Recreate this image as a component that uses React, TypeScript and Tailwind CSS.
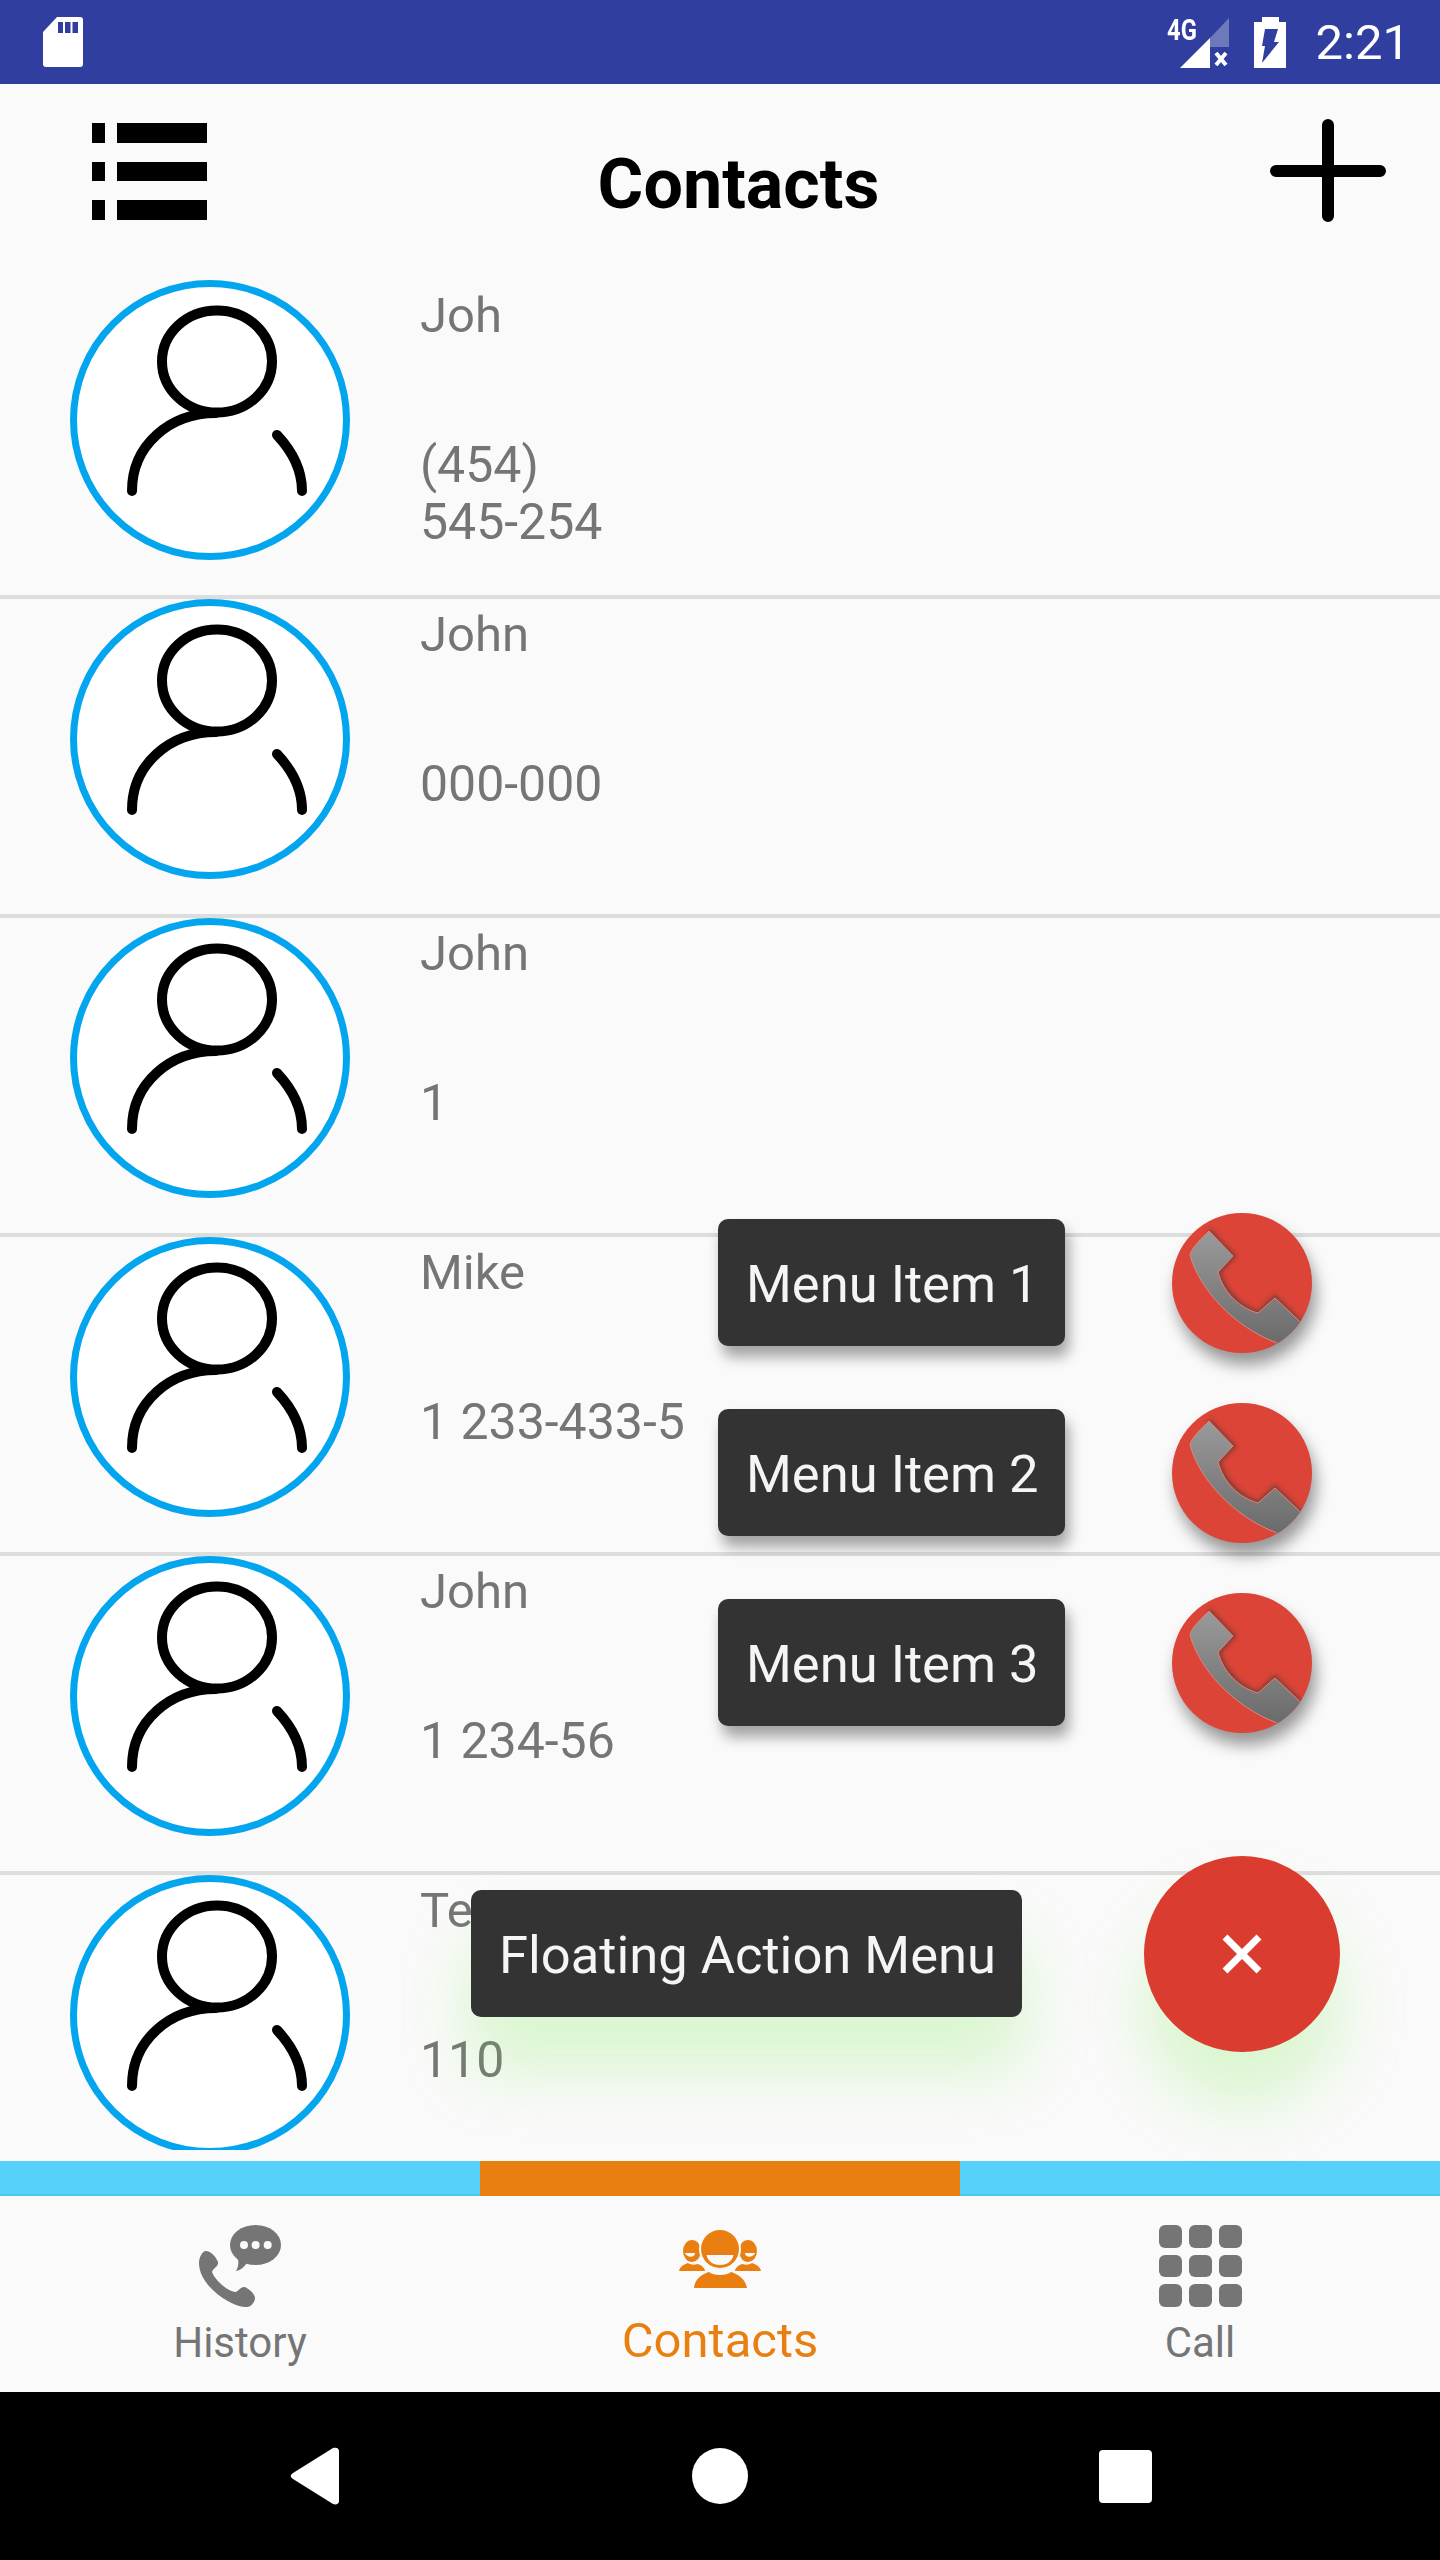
const contacts = [
  { name: "Joh", phone: "(454)\n545-254" },
  { name: "John", phone: "000-000" },
  { name: "John", phone: "1" },
  { name: "Mike", phone: "1 233-433-5" },
  { name: "John", phone: "1 234-56" },
  { name: "Te", phone: "110" },
];

const menuItems = ["Menu Item 1", "Menu Item 2", "Menu Item 3"];

function StatusBar() {
  return (
    <div className="relative flex h-[84px] shrink-0 items-center justify-between bg-[#303f9f] pl-[43px] pr-[30px] text-white">
      <svg width="40" height="50" viewBox="0 0 40 50" className="mt-[-1px]">
        <path d="M14 0H37a3 3 0 0 1 3 3V47a3 3 0 0 1-3 3H3a3 3 0 0 1-3-3V15Z" fill="#fff" />
        <rect x="15" y="5" width="5" height="11" fill="#303f9f" />
        <rect x="22" y="5" width="5.5" height="11" fill="#303f9f" />
        <rect x="29.5" y="5" width="5.5" height="11" fill="#303f9f" />
      </svg>
      <div className="flex items-center">
        <div className="relative h-[51px] w-[62px]">
          <span className="absolute left-0 top-[-4px] origin-left scale-x-[0.82] text-[29px] font-bold leading-[34px]">4G</span>
        </div>
        <svg width="49" height="50" viewBox="0 0 49 50" className="ml-[-49px] mt-[1px]">
          <path d="M30 20 49 0V29H30Z" fill="#fff" fillOpacity="0.3" />
          <path d="M0 50 30 20V50Z" fill="#fff" />
          <path d="M36 35 46 47M46 35 36 47" stroke="#fff" strokeWidth="4" />
        </svg>
        <svg width="32" height="51" viewBox="0 0 32 51" className="ml-[25px]">
          <path d="M8 0H25V5H32V51H0V5H8Z" fill="#fff" />
          <path d="M11 12H24L20 25H25L8 46 11 29H8Z" fill="#303f9f" />
        </svg>
        <span className="ml-[30px] text-[49px] leading-[57px]">2:21</span>
      </div>
    </div>
  );
}

function AppHeader() {
  return (
    <div className="flex h-[196px] shrink-0 items-center justify-between pl-[92px] pr-[54px]">
      <svg width="115" height="97" viewBox="0 0 115 97" className="mt-[-22px]">
        <rect x="0" y="0" width="13" height="20" />
        <rect x="25" y="0" width="90" height="20" />
        <rect x="0" y="39" width="13" height="19" />
        <rect x="25" y="39" width="90" height="19" />
        <rect x="0" y="77" width="13" height="20" />
        <rect x="25" y="77" width="90" height="20" />
      </svg>
      <h1 className="mt-[4px] text-[70px] font-bold leading-[82px] text-black">Contacts</h1>
      <svg width="116" height="103" viewBox="0 0 116 103" className="mt-[-23px]">
        <path d="M58 6V97M6 52H110" stroke="#000" strokeWidth="12" strokeLinecap="round" />
      </svg>
    </div>
  );
}

function Avatar() {
  return (
    <div className="h-[280px] w-[280px] shrink-0 rounded-full border-[7px] border-[#03a5ee] bg-white">
      <svg width="280" height="280" viewBox="0 0 280 280" className="m-[-7px]" fill="none" stroke="#000" strokeWidth="10" strokeLinecap="round">
        <ellipse cx="147" cy="81.5" rx="55" ry="51" />
        <path d="M62 211C62 165 100 133 146 133" />
        <path d="M207 155C223 172 232 190 232 211" />
      </svg>
    </div>
  );
}

function ContactRow({ name, phone }: { name: string; phone: string }) {
  return (
    <div className="flex h-[319px] shrink-0 border-b-[4px] border-[#dddddd] pl-[70px]">
      <Avatar />
      <div className="ml-[70px] w-[275px] pt-[7px] leading-[57px] text-[#757575]">
        <div className="text-[49px]">{name}</div>
        <div className="mt-[93px] whitespace-pre-line text-[50px]">{phone}</div>
      </div>
    </div>
  );
}

function PhoneIcon() {
  return (
    <svg width="140" height="140" viewBox="0 0 140 140" className="block rounded-full">
      <defs>
        <linearGradient id="phoneFill" x1="0" y1="0" x2="0" y2="1">
          <stop offset="0" stopColor="#9a9a9a" />
          <stop offset="1" stopColor="#666666" />
        </linearGradient>
        <filter id="phoneShade" x="-20%" y="-20%" width="140%" height="140%">
          <feGaussianBlur stdDeviation="2" />
        </filter>
      </defs>
      <path d="M37 17 62 43 47 59C52 78 68 94 86 100L103 84 140 120" fill="none" stroke="#5a3a36" strokeWidth="3" filter="url(#phoneShade)" />
      <path d="M37 18 61 43 46 59C51 79 67 95 86 100L103 85 142 122 118 142 105 130C62 114 27 76 18 42 19 35 31 24 37 18Z" fill="url(#phoneFill)" stroke="#d8897e" strokeWidth="1" />
    </svg>
  );
}

function FabMenu() {
  return (
    <div className="absolute inset-x-0 top-[1213px] flex flex-col">
      {menuItems.map((item) => (
        <div key={item} className="mb-[50px] flex items-center justify-end pr-[128px]">
          <div className="mt-[-1px] flex h-[127px] w-[347px] items-center rounded-[10px] bg-[#333333] pl-[28px] pt-[2px] text-[52.5px] leading-[60px] text-[#f5f5f5] shadow-[4px_11px_14px_rgba(0,0,0,0.35)]">
            {item}
          </div>
          <div className="ml-[107px] h-[140px] w-[140px] overflow-hidden rounded-full bg-[#db4437] shadow-[4px_12px_16px_rgba(0,0,0,0.4)]">
            <PhoneIcon />
          </div>
        </div>
      ))}
      <div className="mt-[73px] flex items-center justify-end pr-[100px]">
        <div className="mt-[-1px] flex h-[127px] w-[551px] items-center rounded-[10px] bg-[#333333] pl-[28px] pt-[2px] text-[52.5px] leading-[60px] text-[#f5f5f5] shadow-[0_52px_66px_rgba(120,235,74,0.25)]">
          Floating Action Menu
        </div>
        <div className="ml-[122px] flex h-[196px] w-[196px] items-center justify-center rounded-full bg-[#db3c30] shadow-[0_52px_66px_rgba(120,235,74,0.25)]">
          <svg width="40" height="40" viewBox="0 0 40 40">
            <path d="M3 3 37 37M37 3 3 37" stroke="#fff" strokeWidth="7" />
          </svg>
        </div>
      </div>
    </div>
  );
}

function HistoryIcon() {
  return (
    <svg width="82" height="82" viewBox="0 0 82 82" fill="#757575">
      <path d="M7 26C11 26 16 30 19 37 20 41 14 43 13 47 16 55 28 66 36 67 39 67 42 61 46 62 50 64 56 69 56 73 56 77 52 82 48 82 34 83 0 62 0 38 0 33 3 26 7 26Z" />
      <ellipse cx="56.5" cy="20" rx="25.5" ry="20" />
      <path d="M37 46C42 45 45 42 48 38L38 30C40 36 40 41 37 46Z" />
      <circle cx="45" cy="20" r="4" fill="#fafafa" />
      <circle cx="56.6" cy="20" r="4" fill="#fafafa" />
      <circle cx="68.7" cy="20" r="4" fill="#fafafa" />
    </svg>
  );
}

function ContactsIcon() {
  return (
    <svg width="82" height="58" viewBox="0 0 82 58" fill="#e87f10">
      <ellipse cx="13" cy="21" rx="9" ry="11" />
      <path d="M6 23H16C16 28 8 28 6 23Z" fill="#fafafa" />
      <path d="M0 41C1 36 6 34 9 33 12 35 15 35 19 34 22 35 26 38 26 41Z" />
      <ellipse cx="69" cy="21" rx="9" ry="11" />
      <path d="M66 23H76C74 28 66 28 66 23Z" fill="#fafafa" />
      <path d="M82 41C81 36 76 34 73 33 70 35 67 35 63 34 60 35 56 38 56 41Z" />
      <ellipse cx="41" cy="19" rx="21" ry="21" fill="#fafafa" />
      <ellipse cx="41" cy="19" rx="19" ry="19" />
      <path d="M27.5 25H54.5C53 32 47 35 41 35 35 35 29 32 27.5 25Z" fill="#fafafa" />
      <path d="M15 58C16 48 24 44 30 42 34 46 48 46 52 42 58 44 66 48 68 58Z" />
    </svg>
  );
}

function DialIcon() {
  return (
    <div className="grid h-[82px] w-[83px] grid-cols-3 gap-x-[7px] gap-y-[7px]">
      {Array.from({ length: 9 }).map((_, i) => (
        <div key={i} className="rounded-[6px] bg-[#757575]" />
      ))}
    </div>
  );
}

function BottomTabs() {
  return (
    <div className="flex h-[196px] shrink-0 bg-[#fafafa] text-[#757575]">
      <div className="flex w-[480px] flex-col items-center pt-[29px]">
        <HistoryIcon />
        <span className="mt-[11px] text-[42px] leading-[49px]">History</span>
      </div>
      <div className="flex w-[480px] flex-col items-center pt-[34px] text-[#e87f10]">
        <ContactsIcon />
        <span className="mt-[24px] text-[49px] leading-[57px]">Contacts</span>
      </div>
      <div className="flex w-[480px] flex-col items-center pt-[29px]">
        <DialIcon />
        <span className="mt-[11px] text-[42px] leading-[49px]">Call</span>
      </div>
    </div>
  );
}

function NavBar() {
  return (
    <div className="flex h-[168px] shrink-0 items-center bg-black">
      <div className="flex w-[480px] justify-center pl-[150px]">
        <svg width="50" height="58" viewBox="0 0 50 58">
          <path d="M3 26 43 1C46 0 49 1 49 4V54C49 57 46 58 43 57L3 32C0 30 0 28 3 26Z" fill="#fff" />
        </svg>
      </div>
      <div className="flex w-[480px] justify-center">
        <div className="h-[56px] w-[56px] rounded-full bg-white" />
      </div>
      <div className="flex w-[480px] justify-center pr-[150px]">
        <div className="h-[53px] w-[53px] rounded-[4px] bg-white" />
      </div>
    </div>
  );
}

export default function App() {
  return (
    <div className="relative flex h-[2560px] w-[1440px] flex-col overflow-hidden bg-[#fafafa] font-['Roboto',sans-serif]">
      <StatusBar />
      <AppHeader />
      <div className="flex h-[1870px] shrink-0 flex-col overflow-hidden">
        {contacts.map((c, i) => (
          <ContactRow key={i} name={c.name} phone={c.phone} />
        ))}
      </div>
      <div className="mt-[11px] flex h-[35px] shrink-0 border-b-2 border-[#4fc6ec] bg-[#56d1f9]">
        <div className="ml-[480px] h-[35px] w-[480px] bg-[#e87f10]" />
      </div>
      <BottomTabs />
      <NavBar />
      <FabMenu />
    </div>
  );
}
